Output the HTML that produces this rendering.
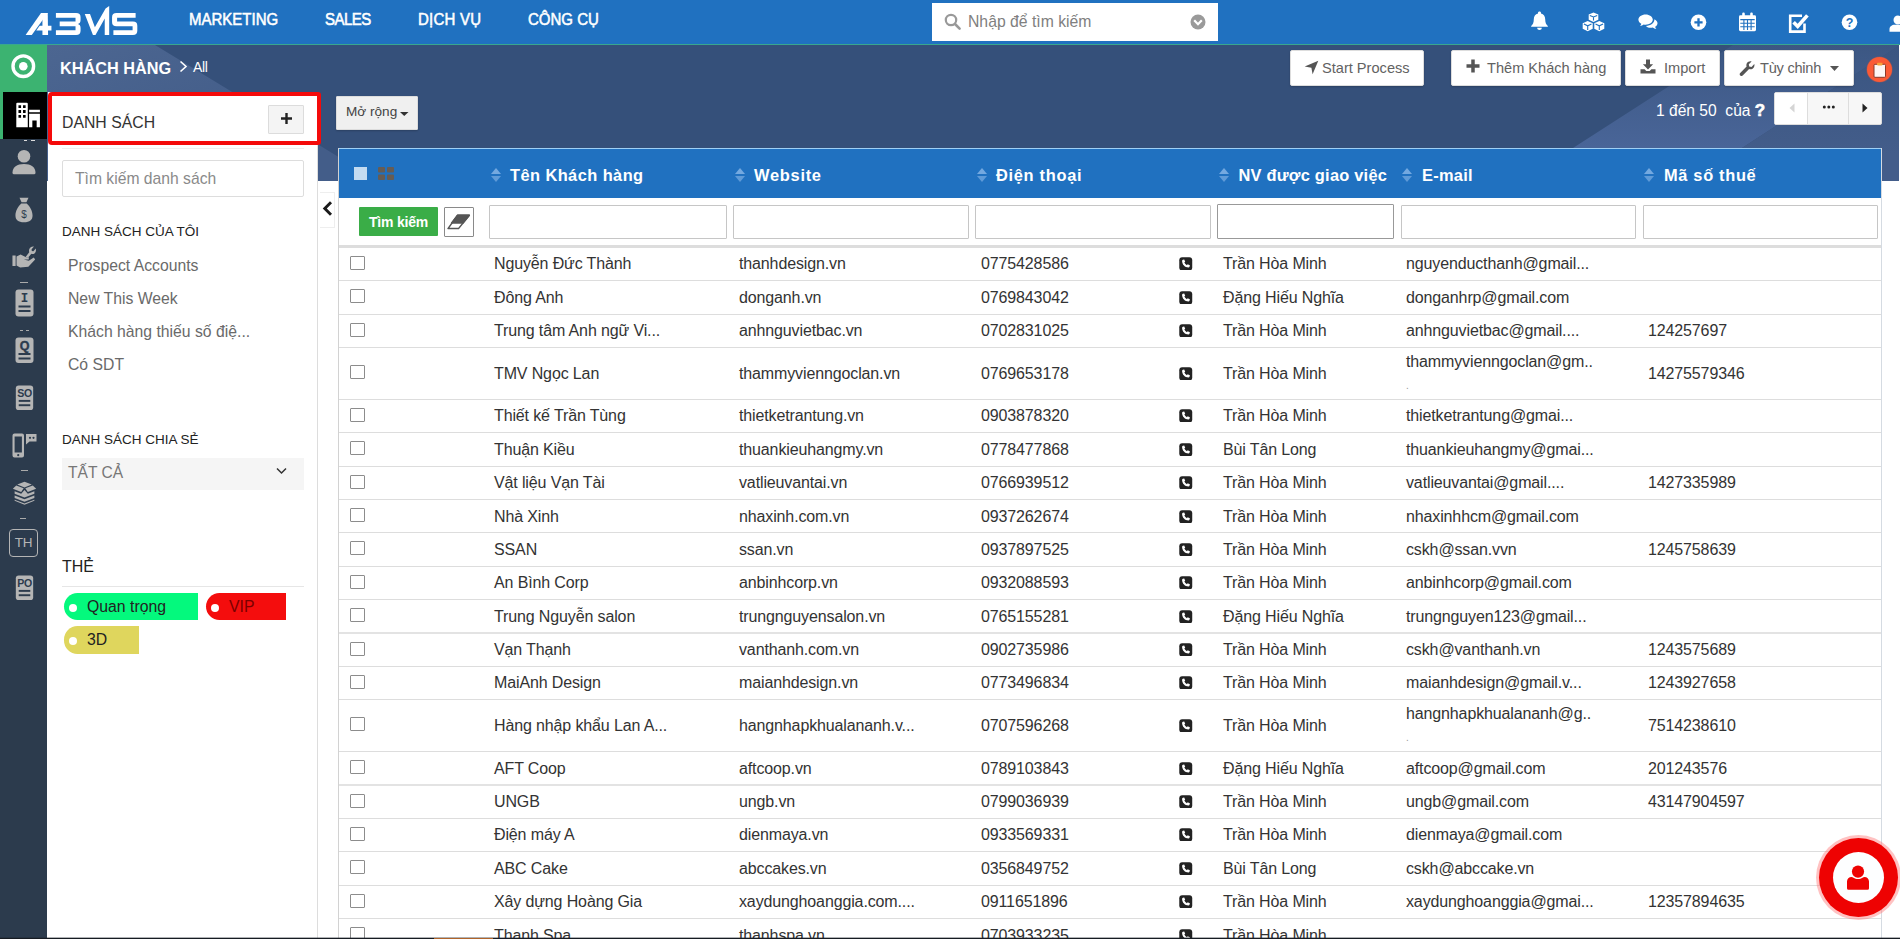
<!DOCTYPE html>
<html lang="vi">
<head>
<meta charset="utf-8">
<title>Khách hàng</title>
<style>
*{box-sizing:border-box;margin:0;padding:0}
html,body{width:1900px;height:939px;overflow:hidden;background:#fff;font-family:"Liberation Sans",sans-serif;color:#333}
.abs{position:absolute}
#page{position:relative;width:1900px;height:939px;overflow:hidden;background:#fff}
/* top bar */
#top{left:0;top:0;width:1900px;height:45px;background:#2071c0;border-bottom:1px solid #39a78e}
#top .menu{position:absolute;top:10.200px;color:#fff;font-size:15px;font-weight:normal;-webkit-text-stroke:.5px #fff;white-space:nowrap;transform:scaleY(1.15);transform-origin:50% 50%}
#search{left:932px;top:3px;width:286px;height:38px;background:#fff}
#search span{position:absolute;left:36px;top:10px;font-size:15.750px;color:#808080;white-space:nowrap}
/* second bar */
#navy{left:0;top:45px;width:1900px;height:136px;background:#35507a;overflow:hidden}
#greenbox{left:0;top:45px;width:47px;height:47px;background:#3cb371}
#crumb{left:60px;top:58.600px;color:#fff;font-size:16.250px;font-weight:bold;white-space:nowrap}
.btn{position:absolute;background:#fff;border:1px solid #ddd;border-radius:2px;color:#626262;font-size:15px;white-space:nowrap;box-shadow:0 1px 2px rgba(0,0,0,.2)}
/* icon rail */
#rail{left:0;top:92px;width:47px;height:847px;background:#2c3b4d}
#railactive{left:0;top:92px;width:47px;height:47px;background:#000;border-left:3px solid #3cb371}
/* list panel */
#panel{left:48px;top:92px;width:270px;height:847px;background:#fff;border-right:1px solid #ddd}
#redbox{left:48px;top:92px;width:273px;height:53px;border:4px solid #f40a0a;background:#fff;border-radius:4px 3px 3px 4px}
.lst{position:absolute;left:68px;font-size:15.750px;color:#6a6a6a;white-space:nowrap}
.sec{position:absolute;left:62px;font-size:14px;color:#222;white-space:nowrap}
.tag{position:absolute;height:27px;border-radius:13.500px 0 0 13.500px;font-size:15.800px;color:#222;line-height:28px;padding-left:23px;white-space:nowrap}
.tag:before{content:"";position:absolute;left:5px;top:11px;width:8px;height:8px;border-radius:50%;background:#fff}
/* table */
#tbl{left:338px;top:148px;width:1544px;height:791px;background:#fff;border-left:1px solid #d2d2d2;border-right:1px solid #d5dbe2}
#thead{left:339px;top:148px;width:1542px;height:50px;background:#2071c0;border-top:1px solid #9fd0f5}
.th{position:absolute;top:165.600px;color:#fff;font-size:16.400px;font-weight:bold;white-space:nowrap}
.fin{position:absolute;top:205px;height:34px;background:#fff;border:1px solid #c6c6c6;border-radius:1px}
.row{position:absolute;left:339px;width:1542px;border-bottom:1px solid #ddd}
.c{position:absolute;font-size:16px;letter-spacing:-.13px;color:#333;white-space:nowrap;line-height:18px}
.cb{position:absolute;left:12px;width:15px;height:14px;border:1px solid #8c8c8c;border-radius:1px;background:#fff}
</style>
</head>
<body>
<div id="page">
<div id="navy" class="abs">
<svg class="abs" style="left:0;top:0" width="1900" height="136" viewBox="0 45 1900 136">
<defs><linearGradient id="rg" x1="0" y1="0" x2="0" y2="1"><stop offset="0" stop-color="#3c5783"/><stop offset=".75" stop-color="#496598"/></linearGradient><linearGradient id="rg2" x1="0" y1="0" x2="0" y2="1"><stop offset="0" stop-color="#3a5581"/><stop offset=".8" stop-color="#435d8a"/></linearGradient><linearGradient id="lg" x1="0" y1="0" x2="1" y2="1"><stop offset="0" stop-color="#4c6691"/><stop offset=".6" stop-color="#435d89"/></linearGradient></defs>
<polygon points="47,45 155,45 378,181 47,181" fill="url(#lg)"/>
<polygon points="1573,148 1733,45 1900,45 1742,148 1742,181 1573,181" fill="url(#rg)"/>
<polygon points="1742,148 1900,45 1900,181 1742,181" fill="url(#rg2)"/>
</svg>
</div>
<div id="greenbox" class="abs"><svg width="47" height="47" viewBox="0 0 47 47"><circle cx="23.300" cy="21.200" r="10.300" fill="none" stroke="#fff" stroke-width="3.400"/><circle cx="23.300" cy="21.200" r="4.300" fill="#fff"/></svg></div>
<div id="crumb" class="abs">KHÁCH HÀNG<svg style="position:absolute;left:118.500px;top:1px" width="9" height="13" viewBox="0 0 9 13"><path d="M1.500 1.500 7 6.500 1.500 11.500" fill="none" stroke="#fff" stroke-width="1.600"/></svg><span style="position:absolute;left:133px;top:0px;font-size:14px;font-weight:normal;letter-spacing:-.3px">All</span></div>
<div class="btn" style="left:1290px;top:50px;width:134px;height:36px"><svg class="abs" style="left:13px;top:9px" width="15" height="15" viewBox="0 0 15 15"><path d="M14.300.700 8.600 14.300 7.400 7.700.700 6.500Z" fill="#555"/></svg><span class="abs" style="left:31px;top:9px;font-size:14.600px">Start Process</span></div>
<div class="btn" style="left:1451px;top:50px;width:170px;height:36px"><svg class="abs" style="left:14px;top:8px" width="14" height="14" viewBox="0 0 14 14"><path d="M7 .5V13.500M.5 7H13.500" stroke="#555" stroke-width="3.500"/></svg><span class="abs" style="left:35px;top:9px;font-size:14.600px">Thêm Khách hàng</span></div>
<div class="btn" style="left:1625px;top:50px;width:95px;height:36px"><svg class="abs" style="left:14px;top:8px" width="16" height="15" viewBox="0 0 16 15"><path d="M6 .5h4v4.800h3.100L8 10.400 2.900 5.300H6z" fill="#555"/><path d="M.5 10.200h4.100l1.700 1.700h3.400l1.700-1.700h4.100v4.300H.5z" fill="#555"/></svg><span class="abs" style="left:38px;top:9px;font-size:14.600px">Import</span></div>
<div class="btn" style="left:1724px;top:50px;width:130px;height:36px"><svg class="abs" style="left:14px;top:9px" width="16" height="16" viewBox="0 0 16 16"><path d="M15.300 4.100c.5 2-.3 3.700-1.700 4.600-1.100.7-2.400.8-3.500.4L3.700 15.500c-.7.700-1.800.7-2.500 0s-.7-1.800 0-2.500L7.600 6.600c-.4-1.100-.3-2.400.4-3.500.9-1.400 2.600-2.200 4.600-1.700L9.800 4.200l.4 2.300 2.300.4z" fill="#555"/></svg><span class="abs" style="left:35px;top:9px;font-size:14.600px;letter-spacing:-.25px">Tùy chỉnh</span><svg class="abs" style="left:105px;top:15px" width="9" height="5" viewBox="0 0 9 5"><path d="M0 0H9L4.500 5Z" fill="#555"/></svg></div>
<div class="abs" style="left:1867px;top:57px;width:25px;height:25px;border-radius:50%;background:#fa5a35;box-shadow:0 0 0 .6px rgba(250,90,53,.35)"><svg class="abs" style="left:6px;top:4.500px" width="13.500" height="16" viewBox="0 0 13.500 16"><rect x="1" y="2.300" width="11.500" height="13" rx="1" fill="#fdf6f4" stroke="#8a3a2a" stroke-width="1"/><rect x="4" y=".8" width="5.500" height="2.600" rx=".8" fill="#f9a23a"/></svg></div>
<div class="btn" style="left:336px;top:96px;width:82px;height:34px;background:#f0f0f0;color:#444;border-radius:1px"><span class="abs" style="left:9px;top:7px;font-size:13.600px">Mở rộng</span><svg class="abs" style="left:63px;top:14.500px" width="8.500" height="4" viewBox="0 0 8 5" preserveAspectRatio="none"><path d="M0 0H8L4 5Z" fill="#333"/></svg></div>
<div class="abs" style="left:1656px;top:101.500px;color:#fff;font-size:15.600px;line-height:18px;white-space:nowrap">1 đến 50&nbsp; của <b style="font-size:17px;line-height:0;position:relative;top:.3px;-webkit-text-stroke:.6px #fff">?</b></div>
<div class="abs" style="left:1774px;top:92px;width:108px;height:33px;background:#f7f7f7;border:1px solid #ddd;border-radius:2px"><div class="abs" style="left:0;top:0;width:33px;height:31px;background:#fff;border-right:1px solid #ddd"></div><div class="abs" style="left:73px;top:0;width:1px;height:31px;background:#ddd"></div><svg class="abs" style="left:14px;top:10px" width="6" height="10" viewBox="0 0 6 10"><path d="M5.500.5V9.500L.5 5Z" fill="#d5d5d5"/></svg><svg class="abs" style="left:47px;top:12px" width="14" height="4" viewBox="0 0 14 4"><circle cx="2.300" cy="2" r="1.500" fill="#222"/><circle cx="6.800" cy="2" r="1.500" fill="#222"/><circle cx="11.300" cy="2" r="1.500" fill="#222"/></svg><svg class="abs" style="left:87px;top:10px" width="6" height="10" viewBox="0 0 6 10"><path d="M.5.5V9.500L5.500 5Z" fill="#222"/></svg></div>
<div id="top" class="abs">
<svg class="abs" style="left:10px;top:0" width="160" height="50" viewBox="0 0 1900 594">
<g fill="#fff">
<polygon points="185,415 258,415 448,155 368,155"/>
<polygon points="385,155 448,155 452,415 385,415"/>
<polygon points="352,305 492,305 492,362 312,362"/>
<path d="M545,155H785Q838,155 838,205V238Q838,278 805,285Q838,292 838,332V365Q838,415 785,415H545V358H778V313H590V256H778V212H545Z"/>
<polygon points="888,165 950,165 1008,325 1135,100 1178,72 1178,415 1125,415 1125,220 1015,415 985,415"/>
<path d="M1492,155V212H1272V256H1460Q1512,256 1512,306V365Q1512,415 1460,415H1228V358H1456V313H1265Q1212,313 1212,262V205Q1212,155 1265,155Z"/>
</g></svg>
<span class="menu" style="left:189px">MARKETING</span>
<span class="menu" style="left:325px;letter-spacing:-.5px">SALES</span>
<span class="menu" style="left:418px;letter-spacing:.25px">DỊCH VỤ</span>
<span class="menu" style="left:528px">CÔNG CỤ</span>
<div id="search" class="abs">
<svg class="abs" style="left:12px;top:10px" width="18" height="18" viewBox="0 0 18 18"><circle cx="7" cy="7" r="5.2" fill="none" stroke="#999" stroke-width="2.2"/><path d="M11 11 L15.6 15.6" stroke="#999" stroke-width="2.6" stroke-linecap="round"/></svg>
<span>Nhập để tìm kiếm</span>
<svg class="abs" style="left:258px;top:11px" width="16" height="16" viewBox="0 0 16 16"><circle cx="8" cy="8" r="7.5" fill="#9a9a9a"/><path d="M4.2 6.2 L8 10.2 L11.8 6.2" fill="none" stroke="#fff" stroke-width="2.2"/></svg>
</div>
<!-- bell -->
<svg class="abs" style="left:1530px;top:11px" width="19" height="20" viewBox="0 0 19 20"><path fill="#fff" d="M9.5 0.6c.9 0 1.5.6 1.5 1.4v.5c2.7.7 4.2 3 4.2 5.8 0 3.6 1 5.2 2.6 6.6.3.3.1.9-.4.9H1.600c-.5 0-.7-.6-.4-.9C2.800 13.500 3.800 11.900 3.800 8.300c0-2.800 1.500-5.100 4.200-5.800V2c0-.8.600-1.400 1.500-1.400zM7.200 16.800h4.600c0 1.300-1 2.300-2.300 2.300s-2.300-1-2.300-2.300z"/></svg>
<!-- cubes -->
<svg class="abs" style="left:1582px;top:12px" width="23" height="20" viewBox="0 0 23 20"><g fill="#fff"><path d="M11.500.5 16.300 2.600V7.700L11.500 9.900 6.700 7.700V2.600Z"/><path d="M5.700 9.100 10.700 11.300V16.800L5.700 19.300.700 16.800V11.300Z"/><path d="M17.300 9.100 22.300 11.300V16.800L17.300 19.300 12.300 16.800V11.300Z"/></g><g fill="none" stroke="#2071c0" stroke-width="1.100"><path d="M7.800 3.400 11.500 5 15.200 3.400M11.500 5V8.600"/><path d="M1.900 12.100 5.700 13.800 9.500 12.100M5.700 13.800V17.900"/><path d="M13.500 12.100 17.300 13.800 21.100 12.100M17.300 13.800V17.900"/></g></svg>
<!-- comments -->
<svg class="abs" style="left:1638px;top:14px" width="20" height="16" viewBox="0 0 20 16"><g fill="#fff"><path d="M7.600.4C11.600.4 14.800 2.700 14.800 5.600s-3.200 5.200-7.200 5.200c-.7 0-1.300-.1-1.900-.2-1 .8-2.300 1.300-3.700 1.400.6-.6 1.100-1.400 1.300-2.200C1.500 8.900.400 7.400.400 5.600.400 2.700 3.600.4 7.600.4z"/><path d="M16.300 5.200c1.900.8 3.200 2.300 3.200 4 0 1.500-.9 2.800-2.400 3.600.2.800.7 1.600 1.300 2.200-1.400-.1-2.700-.6-3.700-1.400-.6.100-1.200.2-1.900.2-2 0-3.800-.7-4.900-1.900 4.800-.1 8.500-2.900 8.500-6.300 0-.1 0-.3-.1-.4z"/></g></svg>
<!-- plus circle -->
<svg class="abs" style="left:1690px;top:14px" width="17" height="17" viewBox="0 0 17 17"><circle cx="8.500" cy="8.300" r="7.800" fill="#fff"/><path d="M8.500 4.200V12.400M4.400 8.300H12.600" stroke="#2071c0" stroke-width="2.300"/></svg>
<!-- calendar -->
<svg class="abs" style="left:1738px;top:12px" width="19" height="20" viewBox="0 0 19 20"><g fill="#fff"><rect x="1" y="3.200" width="17" height="16" rx="1.400"/><rect x="4.200" y=".6" width="2.600" height="5.200" rx="1.200"/><rect x="12.200" y=".6" width="2.600" height="5.200" rx="1.200"/></g><g stroke="#2071c0" stroke-width="1.100" fill="none"><path d="M2.300 7.600H16.700M2.300 11.200H16.700M2.300 14.700H16.700M5.900 7.600V18M9.500 7.600V18M13.100 7.600V18"/></g></svg>
<!-- check square -->
<svg class="abs" style="left:1788px;top:13px" width="22" height="21" viewBox="0 0 22 21"><path d="M16.500 10.500V18.600H2.200V2.700H14" fill="none" stroke="#fff" stroke-width="2.600"/><path d="M5.600 9.200 9.700 13.400 19.400 2.400" fill="none" stroke="#fff" stroke-width="3.600"/></svg>
<!-- question -->
<svg class="abs" style="left:1841px;top:14px" width="17" height="17" viewBox="0 0 17 17"><circle cx="8.500" cy="8.300" r="7.800" fill="#fff"/><text x="8.500" y="12.800" text-anchor="middle" font-family="Liberation Sans" font-weight="bold" font-size="12.500" fill="#2071c0">?</text></svg>
<!-- user -->
<svg class="abs" style="left:1889px;top:15px" width="20" height="18" viewBox="0 0 20 18"><g fill="#fff"><circle cx="9" cy="5" r="4.500"/><path d="M.5 16.800V14c0-2.600 2.600-4.200 5-4.200h7c2.400 0 5 1.600 5 4.200v2.800z"/></g></svg>
</div>
<div id="rail" class="abs"></div>
<div id="railactive" class="abs"><svg class="abs" style="left:11.500px;top:9.500px" width="26" height="26.300" viewBox="0 0 24 26" preserveAspectRatio="none"><path fill="#fff" d="M1.200 1.800Q1.200.8 2.200.8H10.800Q11.800.8 11.800 1.800V25H1.200ZM3.200 3.200V6H5.600V3.200ZM7.400 3.200V6H9.800V3.200ZM3.200 8V10.800H5.600V8ZM7.400 8V10.800H9.800V8ZM3.200 12.800V15.600H5.600V12.800ZM7.400 12.800V15.600H9.800V12.800Z"/><path fill="#fff" d="M13 7.700H23V10.200H13ZM13 11.600H23V25H20V18.300H16V25H13Z"/></svg></div>
<div class="abs" style="left:24px;top:140px;width:3px;height:1px;background:#ddd"></div><div class="abs" style="left:31px;top:140px;width:4px;height:1px;background:#ddd"></div>
<!-- user -->
<svg class="abs" style="left:12px;top:149px" width="24" height="26" viewBox="0 0 24 26"><g fill="#b5b5b5"><circle cx="12" cy="7.200" r="6.300"/><path d="M.5 23.800C.5 17.800 5 15 12 15S23.500 17.800 23.500 23.800Q23.500 25.300 22 25.300H2Q.5 25.300.5 23.800Z"/></g></svg>
<!-- money bag -->
<svg class="abs" style="left:15px;top:196.500px" width="18" height="26" preserveAspectRatio="none" viewBox="0 0 20 26"><path fill="#b5b5b5" d="M5 .8h10l-2.300 4.400H7.300zM7 6.400h6c3.800 3 6.500 7.600 6.500 12 0 4.300-3 6.800-9.500 6.800S.5 22.700.5 18.400C.5 14 3.200 9.400 7 6.400z"/><text x="10" y="21" text-anchor="middle" font-family="Liberation Sans" font-size="11" fill="#2c3b4d">$</text></svg>
<!-- hand wrench -->
<svg class="abs" style="left:11.500px;top:244px" width="24.500" height="27" viewBox="0 0 27 27" preserveAspectRatio="none"><g fill="#b5b5b5"><rect x=".5" y="11.500" width="3.500" height="10.500"/><path d="M5 12.500 9.500 10.500 15.500 13.200 18.500 13.200 18.500 15.500 13 15.500 18.500 16.800 24 13.500 25.500 15.500 18 22.800 9 23.500 5 21.500Z"/><path d="M24.200 2.600 21.600 5.200 21.800 7 23.600 7.200 26.200 4.600C26.800 6.600 26.200 8.400 24.800 9.400 23.600 10.200 22.400 10.200 21.400 9.800L18 13.200H14.800L19 8.200C18.600 7.200 18.600 5.800 19.400 4.600 20.400 3 22.200 2.200 24.200 2.600Z"/></g></svg>
<div class="abs" style="left:20px;top:282px;width:8px;height:1px;background:#aaa"></div>
<!-- doc I -->
<svg class="abs" style="left:15px;top:289px" width="19" height="29" viewBox="0 0 19 29"><rect x=".5" y=".5" width="18" height="27" rx="3" fill="#b5b5b5"/><text x="9.500" y="13" text-anchor="middle" font-family="Liberation Mono" font-weight="bold" font-size="12.500" fill="#2c3b4d">I</text><rect x="3.500" y="16.500" width="12" height="2" fill="#2c3b4d"/><rect x="3.500" y="21" width="12" height="2" fill="#2c3b4d"/></svg>
<div class="abs" style="left:20px;top:330px;width:3px;height:1px;background:#aaa"></div><div class="abs" style="left:26px;top:330px;width:3px;height:1px;background:#aaa"></div>
<!-- doc Q -->
<svg class="abs" style="left:15px;top:337px" width="19" height="27" viewBox="0 0 19 27"><rect x=".5" y=".5" width="18" height="25.500" rx="3" fill="#b5b5b5"/><text x="9.500" y="13" text-anchor="middle" font-family="Liberation Sans" font-weight="bold" font-size="12.500" fill="#2c3b4d" stroke="#2c3b4d" stroke-width=".4">Q</text><rect x="3.500" y="16" width="12" height="2" fill="#2c3b4d"/><rect x="3.500" y="20.500" width="12" height="2" fill="#2c3b4d"/></svg>
<!-- doc SO -->
<svg class="abs" style="left:15px;top:385px" width="19" height="26" viewBox="0 0 19 27"><rect x=".5" y=".5" width="18" height="25.500" rx="3" fill="#b5b5b5"/><text x="9.500" y="12" text-anchor="middle" font-family="Liberation Sans" font-weight="bold" font-size="11" fill="#2c3b4d" letter-spacing="-.5">SO</text><rect x="3.500" y="15.500" width="12" height="2" fill="#2c3b4d"/><rect x="3.500" y="20" width="12" height="2" fill="#2c3b4d"/></svg>
<!-- phone chat -->
<svg class="abs" style="left:12px;top:432px" width="26" height="27" viewBox="0 0 26 27"><g fill="#b5b5b5"><path d="M.5 3.500Q.5 1.500 2.500 1.500H10Q12 1.500 12 3.500V23.500Q12 25.500 10 25.500H2.500Q.5 25.500.5 23.500ZM2.600 4.500V20.500H9.900V4.500ZM6.200 22A1.100 1.100 0 1 0 6.300 24.200 1.100 1.100 0 1 0 6.200 22Z" fill-rule="evenodd"/><path d="M14 2H24.500V9.500H17.500L14 12.500Z"/></g><circle cx="18" cy="5.800" r="1.100" fill="#2c3b4d"/><circle cx="21.500" cy="5.800" r="1.100" fill="#2c3b4d"/></svg>
<div class="abs" style="left:21px;top:470px;width:7px;height:1px;background:#aaa"></div>
<!-- box -->
<svg class="abs" style="left:10.500px;top:480.500px" width="27" height="24.500" viewBox="0 0 26 26" preserveAspectRatio="none"><g fill="#b5b5b5"><path d="M13 .8 20 3.800 13 6.800 6 3.800Z"/><path d="M5 4.800 12.200 7.800 9.800 11.800 1.800 8.300Z"/><path d="M21 4.800 13.800 7.800 16.200 11.800 24.200 8.300Z"/><path d="M3.500 10.800 9.800 13.500 13 9.500 16.200 13.500 22.500 10.800V13.500L13 17.500 3.500 13.500Z"/><path d="M3.500 15.300 13 19.300 22.500 15.300V18L13 22 3.500 18Z"/><path d="M3.500 19.800 13 23.800 22.500 19.800V21L13 25.200 3.500 21Z"/></g></svg>
<div class="abs" style="left:20px;top:518px;width:6px;height:1px;background:#aaa"></div>
<!-- TH -->
<div class="abs" style="left:9px;top:529px;width:29px;height:28px;border:1px solid #b5b5b5;border-radius:4px;color:#b5b5b5;font-size:13.500px;text-align:center;line-height:26px;letter-spacing:-.3px">TH</div>
<!-- doc PO -->
<svg class="abs" style="left:15px;top:575px" width="19" height="26" viewBox="0 0 19 27"><rect x=".5" y=".5" width="18" height="25.500" rx="3" fill="#b5b5b5"/><text x="9.500" y="12" text-anchor="middle" font-family="Liberation Sans" font-weight="bold" font-size="11" fill="#2c3b4d" letter-spacing="-.5">PO</text><rect x="3.500" y="15.500" width="12" height="2" fill="#2c3b4d"/><rect x="3.500" y="20" width="12" height="2" fill="#2c3b4d"/></svg>
<div id="panel" class="abs"></div>
<div id="redbox" class="abs"><span class="abs" style="left:10px;top:18px;font-size:15.800px;color:#333;white-space:nowrap">DANH SÁCH</span><div class="abs" style="left:216px;top:9px;width:36px;height:29px;background:#f4f4f4;border:1px solid #dcdcdc;border-radius:1px"><svg class="abs" style="left:12px;top:7px" width="11" height="11" viewBox="0 0 11 11"><path d="M5.500 0V11M0 5.500H11" stroke="#222" stroke-width="2.400"/></svg></div></div>
<div class="abs" style="left:62px;top:148px;width:242px;height:1px;background:#eee"></div>
<div class="abs" style="left:62px;top:160px;width:242px;height:37px;border:1px solid #ddd;border-radius:2px;background:#fff"><span class="abs" style="left:12px;top:9.200px;font-size:15.700px;color:#8a8a8a;white-space:nowrap">Tìm kiếm danh sách</span></div>
<span class="sec" style="top:223.600px;font-size:13.500px">DANH SÁCH CỦA TÔI</span>
<span class="lst" style="top:257px">Prospect Accounts</span>
<span class="lst" style="top:290px">New This Week</span>
<span class="lst" style="top:323px">Khách hàng thiếu số điệ...</span>
<span class="lst" style="top:356px">Có SDT</span>
<span class="sec" style="top:431.500px;font-size:13.500px">DANH SÁCH CHIA SẺ</span>
<div class="abs" style="left:62px;top:458px;width:242px;height:32px;background:#f5f5f5"><span class="abs" style="left:6px;top:6px;font-size:15.600px;color:#777">TẤT CẢ</span><svg class="abs" style="left:214px;top:9px" width="11" height="8" viewBox="0 0 11 8"><path d="M1 1.500 5.500 6 10 1.500" fill="none" stroke="#333" stroke-width="1.500"/></svg></div>
<span class="sec" style="top:558px;font-size:16px">THẺ</span>
<div class="abs" style="left:62px;top:586px;width:242px;height:1px;background:#e6e6e6"></div>
<div class="tag" style="left:64px;top:593px;width:134px;background:#04f97d">Quan trọng</div>
<div class="tag" style="left:206px;top:593px;width:80px;background:#f40d0d;color:#7a0000">VIP</div>
<div class="tag" style="left:64px;top:626px;width:75px;height:28px;line-height:27px;background:#dfd65d">3D</div>
<div id="tbl" class="abs"></div>
<div id="thead" class="abs"></div>
<div class="abs" style="left:354px;top:167px;width:13px;height:13px;background:#c3dbf1"></div>
<svg class="abs" style="left:378px;top:167px" width="16" height="13" viewBox="0 0 16 13"><g fill="#665c54"><rect x="0" y="0" width="7" height="5.500" rx="1"/><rect x="9" y="0" width="7" height="5.500" rx="1"/><rect x="0" y="7.500" width="7" height="5.500" rx="1"/><rect x="9" y="7.500" width="7" height="5.500" rx="1"/></g></svg>
<svg class="abs" style="left:491px;top:168px" width="10" height="14" viewBox="0 0 10 14"><path d="M5 0 10 6H0Z" fill="#74a9e0"/><path d="M0 8H10L5 14Z" fill="#5f9bd8"/></svg>
<span class="th" style="left:510px;letter-spacing:0.43px">Tên Khách hàng</span>
<div class="fin" style="left:489px;width:238px"></div>
<svg class="abs" style="left:735px;top:168px" width="10" height="14" viewBox="0 0 10 14"><path d="M5 0 10 6H0Z" fill="#74a9e0"/><path d="M0 8H10L5 14Z" fill="#5f9bd8"/></svg>
<span class="th" style="left:754px;letter-spacing:0.74px">Website</span>
<div class="fin" style="left:733px;width:236px"></div>
<svg class="abs" style="left:977px;top:168px" width="10" height="14" viewBox="0 0 10 14"><path d="M5 0 10 6H0Z" fill="#74a9e0"/><path d="M0 8H10L5 14Z" fill="#5f9bd8"/></svg>
<span class="th" style="left:996px;letter-spacing:0.7px">Điện thoại</span>
<div class="fin" style="left:975px;width:236px"></div>
<svg class="abs" style="left:1219px;top:168px" width="10" height="14" viewBox="0 0 10 14"><path d="M5 0 10 6H0Z" fill="#74a9e0"/><path d="M0 8H10L5 14Z" fill="#5f9bd8"/></svg>
<span class="th" style="left:1238.5px;letter-spacing:0.23px">NV được giao việc</span>
<div class="fin" style="left:1217px;width:177px;border-color:#999;top:204px;height:35px"></div>
<svg class="abs" style="left:1402px;top:168px" width="10" height="14" viewBox="0 0 10 14"><path d="M5 0 10 6H0Z" fill="#74a9e0"/><path d="M0 8H10L5 14Z" fill="#5f9bd8"/></svg>
<span class="th" style="left:1422px;letter-spacing:0.27px">E-mail</span>
<div class="fin" style="left:1401px;width:235px"></div>
<svg class="abs" style="left:1644px;top:168px" width="10" height="14" viewBox="0 0 10 14"><path d="M5 0 10 6H0Z" fill="#74a9e0"/><path d="M0 8H10L5 14Z" fill="#5f9bd8"/></svg>
<span class="th" style="left:1664px;letter-spacing:0.68px">Mã số thuế</span>
<div class="fin" style="left:1643px;width:235px"></div>
<div class="abs" style="left:359px;top:207px;width:79px;height:29px;background:#3aad47;border-radius:1px;color:#fff;font-weight:bold;font-size:14px;text-align:center;line-height:31px;letter-spacing:-.2px">Tìm kiếm</div>
<div class="abs" style="left:444px;top:207px;width:30px;height:30px;background:#fff;border:1px solid #8a8a8a;border-radius:1px"><svg class="abs" style="left:2px;top:6px" width="24" height="16" viewBox="0 0 24 16"><path d="M10.600 1.300H22.300L11.500 14.600H1Z" fill="#fff" stroke="#555" stroke-width="1.500" stroke-linejoin="round"/><path d="M10.600 1.300H22.300L16 9H4.600Z" fill="#555" stroke="#555" stroke-width="1.500" stroke-linejoin="round"/></svg></div>
<div class="abs" style="left:339px;top:245px;width:1542px;height:3px;background:#ddd"></div>
<div class="abs" style="left:320px;top:192px;width:15px;height:36px;background:#fff;border:1px solid #eee;border-left:0"><svg class="abs" style="left:2px;top:8px" width="11" height="15" viewBox="0 0 11 15"><path d="M9 1.300 2.800 7.500 9 13.700" fill="none" stroke="#1a1a1a" stroke-width="2.900"/></svg></div>
<div class="abs" style="left:339px;top:280px;width:1542px;height:1px;background:#ddd"></div>
<div class="cb abs" style="left:350px;top:256px"></div>
<span class="c" style="left:494px;top:254.7px">Nguyễn Đức Thành</span>
<span class="c" style="left:739px;top:254.7px">thanhdesign.vn</span>
<span class="c" style="left:981px;top:254.7px">0775428586</span>
<svg class="abs" style="left:1179.300px;top:256.7px" width="13.500" height="13.800" viewBox="0 0 15 15" preserveAspectRatio="none"><rect x=".3" y=".3" width="14.400" height="14.400" rx="3.200" fill="#222"/><path d="M4.300 3.100 5.800 2.700 6.900 5.200 5.900 6c.6 1.300 1.600 2.300 2.900 2.900l.8-1 2.500 1.100-.4 1.500c-.2.600-.6.900-1.200.9C6.600 11.300 3.600 8.300 3.400 4.300c0-.6.300-1 .9-1.200Z" fill="#fff"/></svg>
<span class="c" style="left:1223px;top:254.7px">Trần Hòa Minh</span>
<span class="c" style="left:1406px;top:254.7px">nguyenducthanh@gmail...</span>
<div class="abs" style="left:339px;top:314px;width:1542px;height:1px;background:#ddd"></div>
<div class="cb abs" style="left:350px;top:289px"></div>
<span class="c" style="left:494px;top:288.7px">Đông Anh</span>
<span class="c" style="left:739px;top:288.7px">donganh.vn</span>
<span class="c" style="left:981px;top:288.7px">0769843042</span>
<svg class="abs" style="left:1179.300px;top:290.7px" width="13.500" height="13.800" viewBox="0 0 15 15" preserveAspectRatio="none"><rect x=".3" y=".3" width="14.400" height="14.400" rx="3.200" fill="#222"/><path d="M4.300 3.100 5.800 2.700 6.900 5.200 5.900 6c.6 1.300 1.600 2.300 2.900 2.900l.8-1 2.500 1.100-.4 1.500c-.2.600-.6.900-1.200.9C6.600 11.300 3.600 8.300 3.400 4.300c0-.6.300-1 .9-1.200Z" fill="#fff"/></svg>
<span class="c" style="left:1223px;top:288.7px">Đặng Hiếu Nghĩa</span>
<span class="c" style="left:1406px;top:288.7px">donganhrp@gmail.com</span>
<div class="abs" style="left:339px;top:347px;width:1542px;height:1px;background:#ddd"></div>
<div class="cb abs" style="left:350px;top:323px"></div>
<span class="c" style="left:494px;top:321.7px">Trung tâm Anh ngữ Vi...</span>
<span class="c" style="left:739px;top:321.7px">anhnguvietbac.vn</span>
<span class="c" style="left:981px;top:321.7px">0702831025</span>
<svg class="abs" style="left:1179.300px;top:323.7px" width="13.500" height="13.800" viewBox="0 0 15 15" preserveAspectRatio="none"><rect x=".3" y=".3" width="14.400" height="14.400" rx="3.200" fill="#222"/><path d="M4.300 3.100 5.800 2.700 6.900 5.200 5.900 6c.6 1.300 1.600 2.300 2.900 2.900l.8-1 2.500 1.100-.4 1.500c-.2.600-.6.900-1.200.9C6.600 11.300 3.600 8.300 3.400 4.300c0-.6.300-1 .9-1.200Z" fill="#fff"/></svg>
<span class="c" style="left:1223px;top:321.7px">Trần Hòa Minh</span>
<span class="c" style="left:1406px;top:321.7px">anhnguvietbac@gmail....</span>
<span class="c" style="left:1648px;top:321.7px">124257697</span>
<div class="abs" style="left:339px;top:399px;width:1542px;height:1px;background:#ddd"></div>
<div class="cb abs" style="left:350px;top:365px"></div>
<span class="c" style="left:494px;top:364.7px">TMV Ngọc Lan</span>
<span class="c" style="left:739px;top:364.7px">thammyvienngoclan.vn</span>
<span class="c" style="left:981px;top:364.7px">0769653178</span>
<svg class="abs" style="left:1179.300px;top:366.7px" width="13.500" height="13.800" viewBox="0 0 15 15" preserveAspectRatio="none"><rect x=".3" y=".3" width="14.400" height="14.400" rx="3.200" fill="#222"/><path d="M4.300 3.100 5.800 2.700 6.900 5.200 5.900 6c.6 1.300 1.600 2.300 2.900 2.900l.8-1 2.500 1.100-.4 1.500c-.2.600-.6.900-1.200.9C6.600 11.300 3.600 8.300 3.400 4.300c0-.6.300-1 .9-1.200Z" fill="#fff"/></svg>
<span class="c" style="left:1223px;top:364.7px">Trần Hòa Minh</span>
<span class="c" style="left:1406px;top:352.7px">thammyvienngoclan@gm..</span>
<span class="c" style="left:1406px;top:376.7px;font-size:10px;color:#999">.</span>
<span class="c" style="left:1648px;top:364.7px">14275579346</span>
<div class="abs" style="left:339px;top:432px;width:1542px;height:1px;background:#ddd"></div>
<div class="cb abs" style="left:350px;top:408px"></div>
<span class="c" style="left:494px;top:406.7px">Thiết kế Trần Tùng</span>
<span class="c" style="left:739px;top:406.7px">thietketrantung.vn</span>
<span class="c" style="left:981px;top:406.7px">0903878320</span>
<svg class="abs" style="left:1179.300px;top:408.7px" width="13.500" height="13.800" viewBox="0 0 15 15" preserveAspectRatio="none"><rect x=".3" y=".3" width="14.400" height="14.400" rx="3.200" fill="#222"/><path d="M4.300 3.100 5.800 2.700 6.900 5.200 5.900 6c.6 1.300 1.600 2.300 2.900 2.900l.8-1 2.500 1.100-.4 1.500c-.2.600-.6.900-1.200.9C6.600 11.300 3.600 8.300 3.400 4.300c0-.6.300-1 .9-1.200Z" fill="#fff"/></svg>
<span class="c" style="left:1223px;top:406.7px">Trần Hòa Minh</span>
<span class="c" style="left:1406px;top:406.7px">thietketrantung@gmai...</span>
<div class="abs" style="left:339px;top:466px;width:1542px;height:1px;background:#ddd"></div>
<div class="cb abs" style="left:350px;top:441px"></div>
<span class="c" style="left:494px;top:440.7px">Thuận Kiều</span>
<span class="c" style="left:739px;top:440.7px">thuankieuhangmy.vn</span>
<span class="c" style="left:981px;top:440.7px">0778477868</span>
<svg class="abs" style="left:1179.300px;top:442.7px" width="13.500" height="13.800" viewBox="0 0 15 15" preserveAspectRatio="none"><rect x=".3" y=".3" width="14.400" height="14.400" rx="3.200" fill="#222"/><path d="M4.300 3.100 5.800 2.700 6.900 5.200 5.900 6c.6 1.300 1.600 2.300 2.900 2.900l.8-1 2.500 1.100-.4 1.500c-.2.600-.6.900-1.200.9C6.600 11.300 3.600 8.300 3.400 4.300c0-.6.300-1 .9-1.200Z" fill="#fff"/></svg>
<span class="c" style="left:1223px;top:440.7px">Bùi Tân Long</span>
<span class="c" style="left:1406px;top:440.7px">thuankieuhangmy@gmai...</span>
<div class="abs" style="left:339px;top:499px;width:1542px;height:1px;background:#ddd"></div>
<div class="cb abs" style="left:350px;top:475px"></div>
<span class="c" style="left:494px;top:473.7px">Vật liệu Vạn Tài</span>
<span class="c" style="left:739px;top:473.7px">vatlieuvantai.vn</span>
<span class="c" style="left:981px;top:473.7px">0766939512</span>
<svg class="abs" style="left:1179.300px;top:475.7px" width="13.500" height="13.800" viewBox="0 0 15 15" preserveAspectRatio="none"><rect x=".3" y=".3" width="14.400" height="14.400" rx="3.200" fill="#222"/><path d="M4.300 3.100 5.800 2.700 6.900 5.200 5.900 6c.6 1.300 1.600 2.300 2.900 2.900l.8-1 2.500 1.100-.4 1.500c-.2.600-.6.900-1.200.9C6.600 11.300 3.600 8.300 3.400 4.300c0-.6.300-1 .9-1.200Z" fill="#fff"/></svg>
<span class="c" style="left:1223px;top:473.7px">Trần Hòa Minh</span>
<span class="c" style="left:1406px;top:473.7px">vatlieuvantai@gmail....</span>
<span class="c" style="left:1648px;top:473.7px">1427335989</span>
<div class="abs" style="left:339px;top:532px;width:1542px;height:1px;background:#ddd"></div>
<div class="cb abs" style="left:350px;top:508px"></div>
<span class="c" style="left:494px;top:507.7px">Nhà Xinh</span>
<span class="c" style="left:739px;top:507.7px">nhaxinh.com.vn</span>
<span class="c" style="left:981px;top:507.7px">0937262674</span>
<svg class="abs" style="left:1179.300px;top:509.7px" width="13.500" height="13.800" viewBox="0 0 15 15" preserveAspectRatio="none"><rect x=".3" y=".3" width="14.400" height="14.400" rx="3.200" fill="#222"/><path d="M4.300 3.100 5.800 2.700 6.900 5.200 5.900 6c.6 1.300 1.600 2.300 2.900 2.900l.8-1 2.500 1.100-.4 1.500c-.2.600-.6.900-1.200.9C6.600 11.300 3.600 8.300 3.400 4.300c0-.6.300-1 .9-1.200Z" fill="#fff"/></svg>
<span class="c" style="left:1223px;top:507.7px">Trần Hòa Minh</span>
<span class="c" style="left:1406px;top:507.7px">nhaxinhhcm@gmail.com</span>
<div class="abs" style="left:339px;top:566px;width:1542px;height:1px;background:#ddd"></div>
<div class="cb abs" style="left:350px;top:541px"></div>
<span class="c" style="left:494px;top:540.7px">SSAN</span>
<span class="c" style="left:739px;top:540.7px">ssan.vn</span>
<span class="c" style="left:981px;top:540.7px">0937897525</span>
<svg class="abs" style="left:1179.300px;top:542.7px" width="13.500" height="13.800" viewBox="0 0 15 15" preserveAspectRatio="none"><rect x=".3" y=".3" width="14.400" height="14.400" rx="3.200" fill="#222"/><path d="M4.300 3.100 5.800 2.700 6.900 5.200 5.900 6c.6 1.300 1.600 2.300 2.900 2.900l.8-1 2.500 1.100-.4 1.500c-.2.600-.6.900-1.200.9C6.600 11.300 3.600 8.300 3.400 4.300c0-.6.300-1 .9-1.200Z" fill="#fff"/></svg>
<span class="c" style="left:1223px;top:540.7px">Trần Hòa Minh</span>
<span class="c" style="left:1406px;top:540.7px">cskh@ssan.vvn</span>
<span class="c" style="left:1648px;top:540.7px">1245758639</span>
<div class="abs" style="left:339px;top:599px;width:1542px;height:1px;background:#ddd"></div>
<div class="cb abs" style="left:350px;top:575px"></div>
<span class="c" style="left:494px;top:573.7px">An Bình Corp</span>
<span class="c" style="left:739px;top:573.7px">anbinhcorp.vn</span>
<span class="c" style="left:981px;top:573.7px">0932088593</span>
<svg class="abs" style="left:1179.300px;top:575.7px" width="13.500" height="13.800" viewBox="0 0 15 15" preserveAspectRatio="none"><rect x=".3" y=".3" width="14.400" height="14.400" rx="3.200" fill="#222"/><path d="M4.300 3.100 5.800 2.700 6.900 5.200 5.900 6c.6 1.300 1.600 2.300 2.900 2.900l.8-1 2.500 1.100-.4 1.500c-.2.600-.6.900-1.200.9C6.600 11.300 3.600 8.300 3.400 4.300c0-.6.300-1 .9-1.200Z" fill="#fff"/></svg>
<span class="c" style="left:1223px;top:573.7px">Trần Hòa Minh</span>
<span class="c" style="left:1406px;top:573.7px">anbinhcorp@gmail.com</span>
<div class="abs" style="left:339px;top:632px;width:1542px;height:2px;background:#e3e3e3"></div>
<div class="cb abs" style="left:350px;top:608px"></div>
<span class="c" style="left:494px;top:607.7px">Trung Nguyễn salon</span>
<span class="c" style="left:739px;top:607.7px">trungnguyensalon.vn</span>
<span class="c" style="left:981px;top:607.7px">0765155281</span>
<svg class="abs" style="left:1179.300px;top:609.7px" width="13.500" height="13.800" viewBox="0 0 15 15" preserveAspectRatio="none"><rect x=".3" y=".3" width="14.400" height="14.400" rx="3.200" fill="#222"/><path d="M4.300 3.100 5.800 2.700 6.900 5.200 5.900 6c.6 1.300 1.600 2.300 2.900 2.900l.8-1 2.500 1.100-.4 1.500c-.2.600-.6.900-1.200.9C6.600 11.300 3.600 8.300 3.400 4.300c0-.6.300-1 .9-1.200Z" fill="#fff"/></svg>
<span class="c" style="left:1223px;top:607.7px">Đặng Hiếu Nghĩa</span>
<span class="c" style="left:1406px;top:607.7px">trungnguyen123@gmail...</span>
<div class="abs" style="left:339px;top:666px;width:1542px;height:1px;background:#ddd"></div>
<div class="cb abs" style="left:350px;top:642px"></div>
<span class="c" style="left:494px;top:640.7px">Vạn Thạnh</span>
<span class="c" style="left:739px;top:640.7px">vanthanh.com.vn</span>
<span class="c" style="left:981px;top:640.7px">0902735986</span>
<svg class="abs" style="left:1179.300px;top:642.7px" width="13.500" height="13.800" viewBox="0 0 15 15" preserveAspectRatio="none"><rect x=".3" y=".3" width="14.400" height="14.400" rx="3.200" fill="#222"/><path d="M4.300 3.100 5.800 2.700 6.900 5.200 5.900 6c.6 1.300 1.600 2.300 2.900 2.900l.8-1 2.500 1.100-.4 1.500c-.2.600-.6.900-1.200.9C6.600 11.300 3.600 8.300 3.400 4.300c0-.6.300-1 .9-1.200Z" fill="#fff"/></svg>
<span class="c" style="left:1223px;top:640.7px">Trần Hòa Minh</span>
<span class="c" style="left:1406px;top:640.7px">cskh@vanthanh.vn</span>
<span class="c" style="left:1648px;top:640.7px">1243575689</span>
<div class="abs" style="left:339px;top:699px;width:1542px;height:1px;background:#ddd"></div>
<div class="cb abs" style="left:350px;top:675px"></div>
<span class="c" style="left:494px;top:673.7px">MaiAnh Design</span>
<span class="c" style="left:739px;top:673.7px">maianhdesign.vn</span>
<span class="c" style="left:981px;top:673.7px">0773496834</span>
<svg class="abs" style="left:1179.300px;top:675.7px" width="13.500" height="13.800" viewBox="0 0 15 15" preserveAspectRatio="none"><rect x=".3" y=".3" width="14.400" height="14.400" rx="3.200" fill="#222"/><path d="M4.300 3.100 5.800 2.700 6.900 5.200 5.900 6c.6 1.300 1.600 2.300 2.900 2.900l.8-1 2.500 1.100-.4 1.500c-.2.600-.6.900-1.200.9C6.600 11.300 3.600 8.300 3.400 4.300c0-.6.300-1 .9-1.200Z" fill="#fff"/></svg>
<span class="c" style="left:1223px;top:673.7px">Trần Hòa Minh</span>
<span class="c" style="left:1406px;top:673.7px">maianhdesign@gmail.v...</span>
<span class="c" style="left:1648px;top:673.7px">1243927658</span>
<div class="abs" style="left:339px;top:751px;width:1542px;height:1px;background:#ddd"></div>
<div class="cb abs" style="left:350px;top:717px"></div>
<span class="c" style="left:494px;top:716.7px">Hàng nhập khẩu Lan A...</span>
<span class="c" style="left:739px;top:716.7px">hangnhapkhualananh.v...</span>
<span class="c" style="left:981px;top:716.7px">0707596268</span>
<svg class="abs" style="left:1179.300px;top:718.7px" width="13.500" height="13.800" viewBox="0 0 15 15" preserveAspectRatio="none"><rect x=".3" y=".3" width="14.400" height="14.400" rx="3.200" fill="#222"/><path d="M4.300 3.100 5.800 2.700 6.900 5.200 5.900 6c.6 1.300 1.600 2.300 2.900 2.900l.8-1 2.500 1.100-.4 1.500c-.2.600-.6.900-1.200.9C6.600 11.300 3.600 8.300 3.400 4.300c0-.6.300-1 .9-1.200Z" fill="#fff"/></svg>
<span class="c" style="left:1223px;top:716.7px">Trần Hòa Minh</span>
<span class="c" style="left:1406px;top:704.7px">hangnhapkhualananh@g..</span>
<span class="c" style="left:1406px;top:728.7px;font-size:10px;color:#999">.</span>
<span class="c" style="left:1648px;top:716.7px">7514238610</span>
<div class="abs" style="left:339px;top:784px;width:1542px;height:2px;background:#e3e3e3"></div>
<div class="cb abs" style="left:350px;top:760px"></div>
<span class="c" style="left:494px;top:759.7px">AFT Coop</span>
<span class="c" style="left:739px;top:759.7px">aftcoop.vn</span>
<span class="c" style="left:981px;top:759.7px">0789103843</span>
<svg class="abs" style="left:1179.300px;top:761.7px" width="13.500" height="13.800" viewBox="0 0 15 15" preserveAspectRatio="none"><rect x=".3" y=".3" width="14.400" height="14.400" rx="3.200" fill="#222"/><path d="M4.300 3.100 5.800 2.700 6.900 5.200 5.900 6c.6 1.300 1.600 2.300 2.900 2.900l.8-1 2.500 1.100-.4 1.500c-.2.600-.6.900-1.200.9C6.600 11.300 3.600 8.300 3.400 4.300c0-.6.300-1 .9-1.200Z" fill="#fff"/></svg>
<span class="c" style="left:1223px;top:759.7px">Đặng Hiếu Nghĩa</span>
<span class="c" style="left:1406px;top:759.7px">aftcoop@gmail.com</span>
<span class="c" style="left:1648px;top:759.7px">201243576</span>
<div class="abs" style="left:339px;top:818px;width:1542px;height:1px;background:#ddd"></div>
<div class="cb abs" style="left:350px;top:794px"></div>
<span class="c" style="left:494px;top:792.7px">UNGB</span>
<span class="c" style="left:739px;top:792.7px">ungb.vn</span>
<span class="c" style="left:981px;top:792.7px">0799036939</span>
<svg class="abs" style="left:1179.300px;top:794.7px" width="13.500" height="13.800" viewBox="0 0 15 15" preserveAspectRatio="none"><rect x=".3" y=".3" width="14.400" height="14.400" rx="3.200" fill="#222"/><path d="M4.300 3.100 5.800 2.700 6.900 5.200 5.900 6c.6 1.300 1.600 2.300 2.900 2.900l.8-1 2.500 1.100-.4 1.500c-.2.600-.6.900-1.200.9C6.600 11.300 3.600 8.300 3.400 4.300c0-.6.300-1 .9-1.200Z" fill="#fff"/></svg>
<span class="c" style="left:1223px;top:792.7px">Trần Hòa Minh</span>
<span class="c" style="left:1406px;top:792.7px">ungb@gmail.com</span>
<span class="c" style="left:1648px;top:792.7px">43147904597</span>
<div class="abs" style="left:339px;top:851px;width:1542px;height:1px;background:#ddd"></div>
<div class="cb abs" style="left:350px;top:827px"></div>
<span class="c" style="left:494px;top:825.7px">Điện máy A</span>
<span class="c" style="left:739px;top:825.7px">dienmaya.vn</span>
<span class="c" style="left:981px;top:825.7px">0933569331</span>
<svg class="abs" style="left:1179.300px;top:827.7px" width="13.500" height="13.800" viewBox="0 0 15 15" preserveAspectRatio="none"><rect x=".3" y=".3" width="14.400" height="14.400" rx="3.200" fill="#222"/><path d="M4.300 3.100 5.800 2.700 6.900 5.200 5.900 6c.6 1.300 1.600 2.300 2.900 2.900l.8-1 2.500 1.100-.4 1.500c-.2.600-.6.900-1.200.9C6.600 11.300 3.600 8.300 3.400 4.300c0-.6.300-1 .9-1.200Z" fill="#fff"/></svg>
<span class="c" style="left:1223px;top:825.7px">Trần Hòa Minh</span>
<span class="c" style="left:1406px;top:825.7px">dienmaya@gmail.com</span>
<div class="abs" style="left:339px;top:885px;width:1542px;height:1px;background:#ddd"></div>
<div class="cb abs" style="left:350px;top:860px"></div>
<span class="c" style="left:494px;top:859.7px">ABC Cake</span>
<span class="c" style="left:739px;top:859.7px">abccakes.vn</span>
<span class="c" style="left:981px;top:859.7px">0356849752</span>
<svg class="abs" style="left:1179.300px;top:861.7px" width="13.500" height="13.800" viewBox="0 0 15 15" preserveAspectRatio="none"><rect x=".3" y=".3" width="14.400" height="14.400" rx="3.200" fill="#222"/><path d="M4.300 3.100 5.800 2.700 6.900 5.200 5.900 6c.6 1.300 1.600 2.300 2.900 2.900l.8-1 2.500 1.100-.4 1.500c-.2.600-.6.900-1.200.9C6.600 11.300 3.600 8.300 3.400 4.300c0-.6.300-1 .9-1.200Z" fill="#fff"/></svg>
<span class="c" style="left:1223px;top:859.7px">Bùi Tân Long</span>
<span class="c" style="left:1406px;top:859.7px">cskh@abccake.vn</span>
<div class="abs" style="left:339px;top:918px;width:1542px;height:1px;background:#ddd"></div>
<div class="cb abs" style="left:350px;top:894px"></div>
<span class="c" style="left:494px;top:892.7px">Xây dựng Hoàng Gia</span>
<span class="c" style="left:739px;top:892.7px">xaydunghoanggia.com....</span>
<span class="c" style="left:981px;top:892.7px">0911651896</span>
<svg class="abs" style="left:1179.300px;top:894.7px" width="13.500" height="13.800" viewBox="0 0 15 15" preserveAspectRatio="none"><rect x=".3" y=".3" width="14.400" height="14.400" rx="3.200" fill="#222"/><path d="M4.300 3.100 5.800 2.700 6.900 5.200 5.900 6c.6 1.300 1.600 2.300 2.900 2.900l.8-1 2.500 1.100-.4 1.500c-.2.600-.6.900-1.200.9C6.600 11.300 3.600 8.300 3.400 4.300c0-.6.300-1 .9-1.200Z" fill="#fff"/></svg>
<span class="c" style="left:1223px;top:892.7px">Trần Hòa Minh</span>
<span class="c" style="left:1406px;top:892.7px">xaydunghoanggia@gmai...</span>
<span class="c" style="left:1648px;top:892.7px">12357894635</span>
<div class="abs" style="left:339px;top:960px;width:1542px;height:1px;background:#ddd"></div>
<div class="cb abs" style="left:350px;top:927px"></div>
<span class="c" style="left:494px;top:926.7px">Thanh Spa</span>
<span class="c" style="left:739px;top:926.7px">thanhspa.vn</span>
<span class="c" style="left:981px;top:926.7px">0703933235</span>
<svg class="abs" style="left:1179.300px;top:928.7px" width="13.500" height="13.800" viewBox="0 0 15 15" preserveAspectRatio="none"><rect x=".3" y=".3" width="14.400" height="14.400" rx="3.200" fill="#222"/><path d="M4.300 3.100 5.800 2.700 6.900 5.200 5.900 6c.6 1.300 1.600 2.300 2.900 2.900l.8-1 2.500 1.100-.4 1.500c-.2.600-.6.900-1.200.9C6.600 11.300 3.600 8.300 3.400 4.300c0-.6.300-1 .9-1.200Z" fill="#fff"/></svg>
<span class="c" style="left:1223px;top:926.7px">Trần Hòa Minh</span>
<div class="abs" style="left:0;top:937px;width:1900px;height:1px;background:rgba(28,35,44,.35)"></div><div class="abs" style="left:0;top:938px;width:1900px;height:1px;background:#161b22"></div><div class="abs" style="left:434px;top:938px;width:59px;height:1px;background:#b0642a"></div>
<div class="abs" style="left:1899px;top:45px;width:1px;height:892px;background:#fff"></div>
<div class="abs" style="left:1816px;top:835px;width:85px;height:85px;border-radius:50%;background:rgba(255,120,120,.45)"></div>
<div class="abs" style="left:1819px;top:838px;width:79px;height:79px;border-radius:50%;background:#ee0202"></div>
<div class="abs" style="left:1832.500px;top:851.500px;width:51px;height:51px;border-radius:50%;background:#fdfeff"></div>
<svg class="abs" style="left:1846px;top:864px" width="24" height="27" viewBox="0 0 24 27"><g fill="#ee0202"><circle cx="12" cy="7.600" r="6.100"/><path d="M1 24.300V17.500c0-2.600 2-4.500 4.500-4.500.8 0 1.400.3 2 .7 1.300.9 2.800 1.400 4.500 1.400s3.200-.5 4.500-1.400c.6-.4 1.200-.7 2-.7 2.500 0 4.500 1.900 4.500 4.500v6.800q0 1.500-1.500 1.500h-19q-1.500 0-1.500-1.500z"/></g></svg>
</div>
</body>
</html>
